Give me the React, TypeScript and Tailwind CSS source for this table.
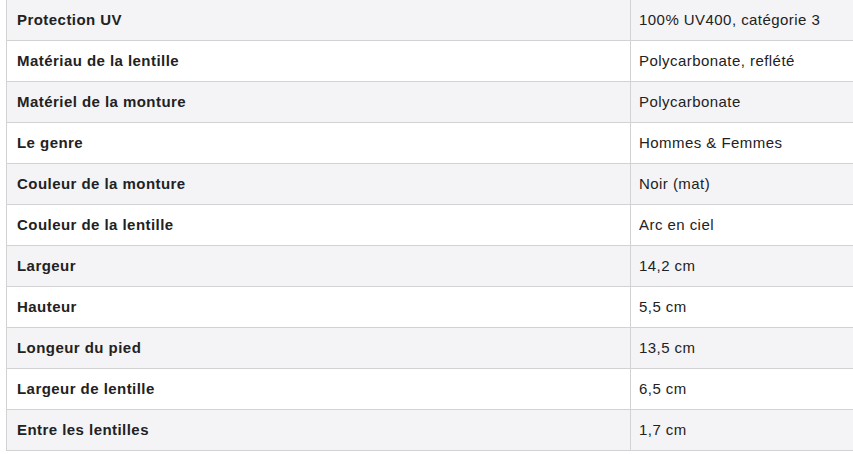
const rows: [string, string][] = [
  ["Protection UV", "100% UV400, catégorie 3"],
  ["Matériau de la lentille", "Polycarbonate, reflété"],
  ["Matériel de la monture", "Polycarbonate"],
  ["Le genre", "Hommes & Femmes"],
  ["Couleur de la monture", "Noir (mat)"],
  ["Couleur de la lentille", "Arc en ciel"],
  ["Largeur", "14,2 cm"],
  ["Hauteur", "5,5 cm"],
  ["Longeur du pied", "13,5 cm"],
  ["Largeur de lentille", "6,5 cm"],
  ["Entre les lentilles", "1,7 cm"],
];

export default function App() {
  return (
    <div className="h-[454px] w-[853px] overflow-hidden bg-white font-['Liberation_Sans',Arial,sans-serif] text-[15px] tracking-[0.45px] text-[#222]">
      <table className="-mt-px ml-[6px] w-[900px] border-collapse">
        <tbody>
          {rows.map(([label, value], i) => (
            <tr key={label} className={i % 2 === 0 ? "bg-[#f4f4f6]" : "bg-white"}>
              <td className="h-[41px] w-[624px] border border-[#d2d2d4] pl-[10px] align-middle font-bold">
                {label}
              </td>
              <td className="h-[41px] border border-[#d2d2d4] pl-[8px] align-middle">{value}</td>
            </tr>
          ))}
        </tbody>
      </table>
    </div>
  );
}
